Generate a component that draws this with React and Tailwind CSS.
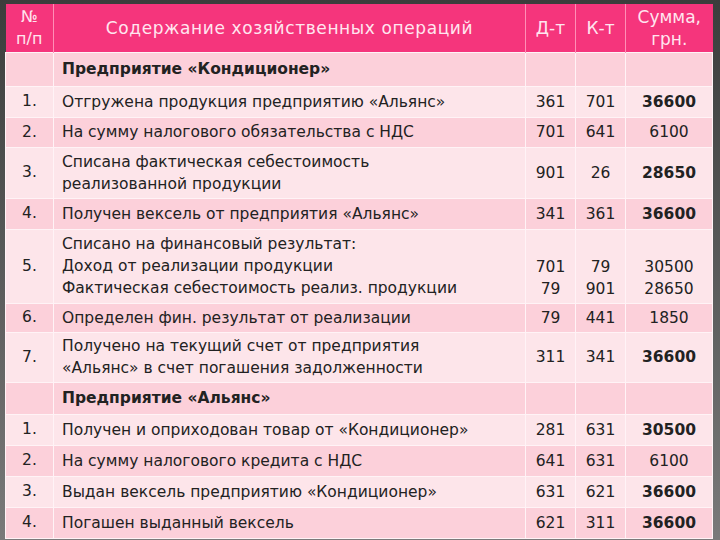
const rows = [
  { type: 'section', text: 'Предприятие «Кондиционер»', h: 34 },
  { n: '1.', text: ['Отгружена продукция предприятию «Альянс»'], d: ['361'], k: ['701'], s: ['36600'], bold: true, h: 31 },
  { n: '2.', text: ['На сумму налогового обязательства с НДС'], d: ['701'], k: ['641'], s: ['6100'], h: 30 },
  { n: '3.', text: ['Списана фактическая себестоимость', 'реализованной продукции'], d: ['901'], k: ['26'], s: ['28650'], bold: true, h: 51 },
  { n: '4.', text: ['Получен вексель от предприятия «Альянс»'], d: ['341'], k: ['361'], s: ['36600'], bold: true, h: 31 },
  {
    n: '5.',
    text: ['Списано на финансовый результат:', 'Доход от реализации продукции', 'Фактическая себестоимость реализ. продукции'],
    d: ['701', '79'], k: ['79', '901'], s: ['30500', '28650'], h: 74, bottom: true,
  },
  { n: '6.', text: ['Определен фин. результат от реализации'], d: ['79'], k: ['441'], s: ['1850'], h: 29 },
  { n: '7.', text: ['Получено на текущий счет от предприятия', '«Альянс» в счет погашения задолженности'], d: ['311'], k: ['341'], s: ['36600'], bold: true, h: 50 },
  { type: 'section', text: 'Предприятие «Альянс»', h: 32 },
  { n: '1.', text: ['Получен и оприходован товар от «Кондиционер»'], d: ['281'], k: ['631'], s: ['30500'], bold: true, h: 31 },
  { n: '2.', text: ['На сумму налогового кредита с НДС'], d: ['641'], k: ['631'], s: ['6100'], h: 31 },
  { n: '3.', text: ['Выдан вексель предприятию «Кондиционер»'], d: ['631'], k: ['621'], s: ['36600'], bold: true, h: 31 },
  { n: '4.', text: ['Погашен выданный вексель'], d: ['621'], k: ['311'], s: ['36600'], bold: true, h: 31 },
]

function Lines({ items, className }) {
  return (
    <div className={className}>
      {items.map((t, i) => (
        <div key={i}>{t}</div>
      ))}
    </div>
  )
}

export default function App() {
  return (
    <div
      className="w-[720px] h-[540px] overflow-hidden bg-gradient-to-b from-[#3b3d3c] to-[#7a7a7a] pl-[5px] pt-[4px]"
      style={{ fontFamily: '"DejaVu Sans", sans-serif' }}
    >
      <table className="w-[707px] table-fixed border-collapse text-[15.5px] leading-[21px] text-[#222]">
        <colgroup>
          <col className="w-[48px]" />
          <col className="w-[472px]" />
          <col className="w-[50px]" />
          <col className="w-[50px]" />
          <col className="w-[87px]" />
        </colgroup>
        <thead>
          <tr className="h-[48px] bg-[#f5357c] text-[#ffe6ef] text-[17px] leading-[22px]">
            <th className="border-r border-[#ff8fb6] font-normal text-center text-[16px]">
              <div>№</div>
              <div>п/п</div>
            </th>
            <th className="border-r border-[#ff8fb6] font-normal text-center tracking-[0.6px]">Содержание хозяйственных операций</th>
            <th className="border-r border-[#ff8fb6] font-normal text-center">Д-т</th>
            <th className="border-r border-[#ff8fb6] font-normal text-center">К-т</th>
            <th className="font-normal text-center">
              <div>Сумма,</div>
              <div>грн.</div>
            </th>
          </tr>
        </thead>
        <tbody>
          {rows.map((r, i) => {
            const bg = i % 2 === 0 ? 'bg-[#fcd0da]' : 'bg-[#fde5ea]'
            if (r.type === 'section') {
              return (
                <tr key={i} className={bg} style={{ height: r.h }}>
                  <td className="border border-[#fff3f6]" />
                  <td className="border border-[#fff3f6] px-2 font-bold">{r.text}</td>
                  <td className="border border-[#fff3f6]" />
                  <td className="border border-[#fff3f6]" />
                  <td className="border border-[#fff3f6]" />
                </tr>
              )
            }
            const valign = r.bottom ? 'align-bottom pb-[3px]' : 'align-middle'
            return (
              <tr key={i} className={bg} style={{ height: r.h }}>
                <td className="border border-[#fff3f6] text-center">{r.n}</td>
                <td className="border border-[#fff3f6] px-2 leading-[22px]">
                  <Lines items={r.text} />
                </td>
                <td className={'border border-[#fff3f6] text-center ' + valign}>
                  <Lines items={r.d} className="leading-[22px]" />
                </td>
                <td className={'border border-[#fff3f6] text-center ' + valign}>
                  <Lines items={r.k} className="leading-[22px]" />
                </td>
                <td className={'border border-[#fff3f6] text-center ' + valign}>
                  <Lines items={r.s} className={r.bold ? 'font-bold leading-[22px]' : 'leading-[22px]'} />
                </td>
              </tr>
            )
          })}
        </tbody>
      </table>
    </div>
  )
}
